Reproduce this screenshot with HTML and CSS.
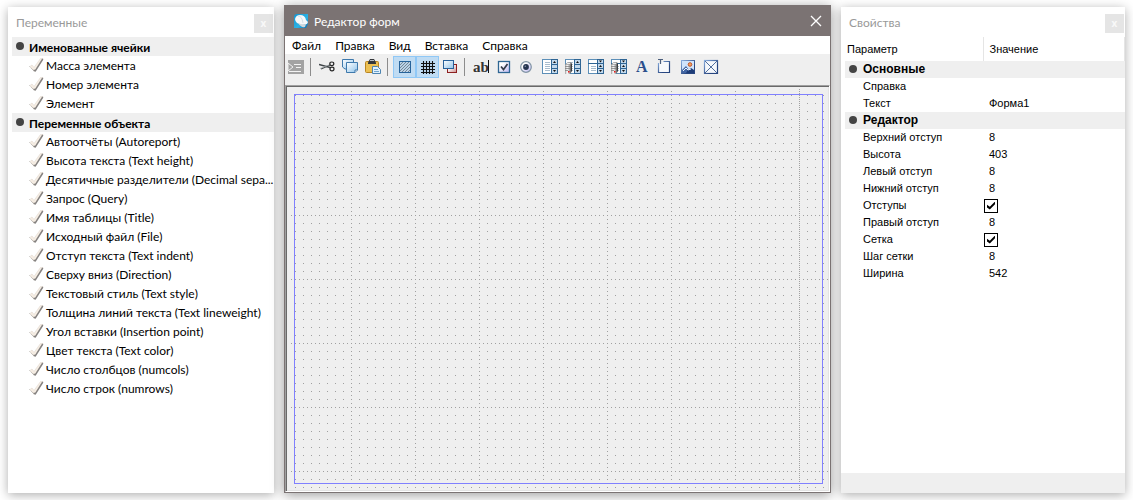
FILE: index.html
```html
<!DOCTYPE html>
<html lang="ru">
<head>
<meta charset="utf-8">
<title>Редактор форм</title>
<link rel="stylesheet" href="styles.css">
</head>
<body>
<svg class="defs" aria-hidden="true">
  <defs>
    <linearGradient id="blue" x1="0" y1="0" x2="1" y2="1"><stop offset="0" stop-color="#fff"/><stop offset="1" stop-color="#8fc3ea"/></linearGradient>
    <linearGradient id="lilac" x1="0" y1="0" x2="1" y2="1"><stop offset="0.3" stop-color="#fff"/><stop offset="1" stop-color="#b9b4f2"/></linearGradient>
    <linearGradient id="red" x1="0" y1="0" x2="1" y2="1"><stop offset="0.3" stop-color="#fff"/><stop offset="1" stop-color="#c98a8a"/></linearGradient>
    <linearGradient id="frame" x1="0" y1="0" x2="1" y2="1"><stop offset="0" stop-color="#8aaede"/><stop offset="0.7" stop-color="#27457f"/></linearGradient>
    <linearGradient id="steel"><stop offset="0" stop-color="#999"/><stop offset="0.3" stop-color="#fff"/><stop offset="0.6" stop-color="#bbb"/><stop offset="1" stop-color="#222"/></linearGradient>
    <linearGradient id="app" x1="0" y1="0" x2="1" y2="1"><stop offset="0" stop-color="#1794cf"/><stop offset="0.6" stop-color="#2bb3e6"/><stop offset="1" stop-color="#0a69ad"/></linearGradient>
    <symbol id="tick" viewBox="0 0 16 16">
      <path d="M1 9.500l2-1.500 2 2.500L11.500 1.500h2.500L6 14H5z" fill="#f6eee4" stroke="#e2d9d0" stroke-width="0.600"/>
      <path d="M13.800 2L6.300 13.800 4.500 13.200" fill="none" stroke="#858280" stroke-width="1.500"/>
      <path d="M0.500 9.500l4 4" fill="none" stroke="#aaa5a0" stroke-width="0.900" stroke-dasharray="1 1"/>
    </symbol>
    <symbol id="list" viewBox="0 0 16 16">
      <rect x="0.500" y="1.500" width="15" height="14" fill="#fff" stroke="#5c8fb8"/>
      <path d="M3 4.500h5M3 6.500h5M3 8.500h5M3 10.500h5M3 12.500h5" stroke="#a8bccd"/>
      <path d="M9 1h7v15H9z" fill="#2f6594"/>
      <path d="M10 2h5v4h-5zM10 7h5v3h-5zM10 11h5v4h-5z" fill="#c3d9ec"/>
      <path d="M11 5h3l-1.500-2zM11 12h3l-1.500 2z" fill="#111"/>
    </symbol>
    <symbol id="combo" viewBox="0 0 16 16">
      <rect x="0.500" y="1.500" width="15" height="14" fill="#fff" stroke="#5c8fb8"/>
      <path d="M0 5h16v1H0zM9 1h7v15H9z" fill="#2f6594"/>
      <path d="M3 8.500h5M3 10.500h5M3 12.500h5" stroke="#a8bccd"/>
      <path d="M10 2h5v3h-5zM10 6h5v4h-5zM10 11h5v4h-5z" fill="#c3d9ec"/>
      <path d="M11 2.500h3l-1.500 2zM11 9h3l-1.500-2zM11 12h3l-1.500 2z" fill="#111"/>
    </symbol>
    <symbol id="base" viewBox="0 0 16 16">
      <path d="M0 7l2-2.500h4L7 6v7l-2 3H0z" fill="url(#steel)"/>
      <path d="M0.500 6.500l2-2h3.500L5 6.500z" fill="#eee" stroke="#777" stroke-width="0.500"/>
      <path d="M0 8.500h5M0 10.500h5M0 12.500h3" stroke="#777" stroke-width="0.700"/>
      <path d="M3 13h1.500v1.500H3z" fill="#f01818"/>
    </symbol>
  </defs>
</svg>

<main class="desktop">
  <section class="panel variables">
    <header class="panel-head"><h2>Переменные</h2><button class="panel-close" aria-label="Закрыть">x</button></header>
    <h3 class="group">Именованные ячейки</h3>
    <ul class="items">
      <li><svg class="tick"><use href="#tick"/></svg><span>Масса элемента</span></li>
      <li><svg class="tick"><use href="#tick"/></svg><span>Номер элемента</span></li>
      <li><svg class="tick"><use href="#tick"/></svg><span>Элемент</span></li>
    </ul>
    <h3 class="group">Переменные объекта</h3>
    <ul class="items">
      <li><svg class="tick"><use href="#tick"/></svg><span>Автоотчёты (Autoreport)</span></li>
      <li><svg class="tick"><use href="#tick"/></svg><span>Высота текста (Text height)</span></li>
      <li><svg class="tick"><use href="#tick"/></svg><span>Десятичные разделители (Decimal sepa...</span></li>
      <li><svg class="tick"><use href="#tick"/></svg><span>Запрос (Query)</span></li>
      <li><svg class="tick"><use href="#tick"/></svg><span>Имя таблицы (Title)</span></li>
      <li><svg class="tick"><use href="#tick"/></svg><span>Исходный файл (File)</span></li>
      <li><svg class="tick"><use href="#tick"/></svg><span>Отступ текста (Text indent)</span></li>
      <li><svg class="tick"><use href="#tick"/></svg><span>Сверху вниз (Direction)</span></li>
      <li><svg class="tick"><use href="#tick"/></svg><span>Текстовый стиль (Text style)</span></li>
      <li><svg class="tick"><use href="#tick"/></svg><span>Толщина линий текста (Text lineweight)</span></li>
      <li><svg class="tick"><use href="#tick"/></svg><span>Угол вставки (Insertion point)</span></li>
      <li><svg class="tick"><use href="#tick"/></svg><span>Цвет текста (Text color)</span></li>
      <li><svg class="tick"><use href="#tick"/></svg><span>Число столбцов (numcols)</span></li>
      <li><svg class="tick"><use href="#tick"/></svg><span>Число строк (numrows)</span></li>
    </ul>
  </section>

  <section class="editor">
    <header class="titlebar">
      <svg class="app-icon" viewBox="0 0 16 16"><path d="M1 4q0-3 3-3h11v10l-2 4H1z" fill="url(#app)"/><path d="M2 6q1-4 5-4 5 0 6 5l2 2-1 2-5 1-5-2q-2-2-2-4z" fill="#f5f8fa"/><path d="M5 10q4 2 8 1l-1 3q-4 1-7-4z" fill="#cfd6db"/><path d="M5 3q4 0 5 7" fill="none" stroke="#c3d3dd" stroke-width="0.700"/></svg>
      <h1>Редактор форм</h1>
      <button class="close" aria-label="Закрыть окно"><svg viewBox="0 0 12 12"><path d="M1 1l10 10M11 1L1 11" stroke="#fff" stroke-width="1.300"/></svg></button>
    </header>
    <nav class="menu"><button>Файл</button><button>Правка</button><button>Вид</button><button>Вставка</button><button>Справка</button></nav>
    <div class="toolbar">
      <button disabled aria-label="Выполнить"><svg viewBox="0 0 16 16"><path d="M0 2h16v14H0z" fill="#a3a3a3"/><path d="M0 5l5 4-5 4z" fill="#a3a3a3" stroke="#efefef"/><path d="M6 6.500h7M8 9.500h5M1 13.500h12" stroke="#f3f3f3"/></svg></button>
      <span class="sep"></span>
      <button aria-label="Вырезать"><svg viewBox="0 0 16 16"><path d="M0 6.500L11 9.500M2 11L11 7" stroke="#3f4548" stroke-width="1.300"/><path d="M1 10.500l9-3.500" stroke="#a9afb2" stroke-width="0.700"/><ellipse cx="12.800" cy="5.800" rx="2" ry="1.800" fill="none" stroke="#252525" stroke-width="1.200"/><ellipse cx="13" cy="11" rx="2" ry="1.800" fill="none" stroke="#252525" stroke-width="1.200"/></svg></button>
      <button aria-label="Копировать"><svg viewBox="0 0 16 16"><path d="M0.500 1.500h11V11H3L0.500 9z" fill="url(#blue)" stroke="#3e79ac"/><path d="M4.500 4.500H15.500V12l-2.500 2.500H4.500z" fill="url(#blue)" stroke="#3e79ac"/><path d="M15.500 12H13v2.500" fill="#fff" stroke="#3e79ac"/></svg></button>
      <button aria-label="Вставить"><svg viewBox="0 0 16 16"><rect x="0.500" y="3.500" width="13" height="11" rx="1" fill="#ecc052" stroke="#b98522"/><path d="M3 4.500L5 1h4l2 3.500V6H3z" fill="#33363a"/><path d="M5 2h4v1H5z" fill="#b8bdc0"/><path d="M7.500 8.500h5l3 3v4h-8z" fill="#e1f1fc" stroke="#4d84b0"/><path d="M9 11.500h4M9 13.500h5" stroke="#6fa5d0"/></svg></button>
      <span class="sep"></span>
      <button class="on" aria-pressed="true" aria-label="Отступы"><svg viewBox="0 0 16 16"><rect x="3.500" y="3.500" width="11" height="11" fill="#b9d2e8" stroke="#27639a"/><path d="M4 7l3-3M4 10l6-6M4 13l9-9M6 14l8-8M9 14l5-5M12 14l2-2" stroke="#6f7f8c" stroke-width="0.900"/></svg></button>
      <button class="on" aria-pressed="true" aria-label="Сетка"><svg viewBox="0 0 16 16"><path d="M4.500 3v13M7.500 3v13M10.500 3v13M13.500 3v13M2 5.500h14M2 8.500h14M2 11.500h14M2 14.500h14" stroke="#111" stroke-width="1.100"/></svg></button>
      <button aria-label="Порядок"><svg viewBox="0 0 16 16"><rect x="5.500" y="6.500" width="9" height="8" fill="url(#red)" stroke="#8d2020"/><rect x="1.500" y="2.500" width="10" height="8" fill="url(#blue)" stroke="#26609a"/></svg></button>
      <span class="sep"></span>
      <button aria-label="Поле ввода"><svg viewBox="0 0 16 16"><text class="ab" x="0" y="14">ab</text><path d="M15.500 2v13" stroke="#111"/></svg></button>
      <button aria-label="Флажок"><svg viewBox="0 0 16 16"><rect x="2.500" y="3.500" width="11" height="11" fill="url(#lilac)" stroke="#2e6693" stroke-width="1.300"/><path d="M5 8.500l2.500 3L11.500 6" fill="none" stroke="#333b49" stroke-width="1.700"/></svg></button>
      <button aria-label="Переключатель"><svg viewBox="0 0 16 16"><circle cx="7" cy="9" r="5.300" fill="url(#lilac)" stroke="#8295a5" stroke-width="1.200"/><circle cx="7" cy="9" r="2.900" fill="#25344f"/><circle cx="6.300" cy="8.300" r="0.800" fill="#8795ae"/></svg></button>
      <button aria-label="Список"><svg><use href="#list"/></svg></button>
      <button aria-label="Список из базы"><svg><use href="#list"/><use href="#base"/></svg></button>
      <button aria-label="Раскрывающийся список"><svg><use href="#combo"/></svg></button>
      <button aria-label="Раскрывающийся список из базы"><svg><use href="#combo"/><use href="#base"/></svg></button>
      <button aria-label="Надпись"><svg viewBox="0 0 16 16"><text class="letter" x="2" y="14">A</text></svg></button>
      <button aria-label="Группа"><svg viewBox="0 0 16 16"><path d="M6.500 3.500h6V14.500H1.500V5" fill="#f7f9fc" stroke="url(#frame)" stroke-width="1.200"/><path d="M1 1.500h5M3.500 1v5" stroke="#4c5f7d" stroke-width="1.200"/></svg></button>
      <button aria-label="Рисунок"><svg viewBox="0 0 16 16"><rect x="1.500" y="2.500" width="13" height="13" fill="#cfe3fb" stroke="url(#frame)"/><path d="M2 12l4-4 5 7H2z" fill="#4165a3"/><path d="M8 12l3-2 3 2v3H6z" fill="#1d3c77"/><path d="M3 13l3-3 2 2 3-1" fill="none" stroke="#eef4fc"/><circle cx="10" cy="6.500" r="1.800" fill="#f3a05a" stroke="#bd532c"/></svg></button>
      <button aria-label="Изображение"><svg viewBox="0 0 16 16"><rect x="1.500" y="2.500" width="13" height="13" fill="#f5f8fc" stroke="url(#frame)" stroke-width="1.200"/><path d="M2 3l12 12M14 3L2 15" stroke="#3d5d92" stroke-width="0.900"/></svg></button>
    </div>
    <div class="canvas">
      <svg class="grid" shape-rendering="crispEdges">
        <defs>
          <pattern id="dots" width="8" height="8" patternUnits="userSpaceOnUse"><path d="M0 0h1v1H0z"/></pattern>
          <pattern id="rows" width="4" height="64" patternUnits="userSpaceOnUse"><path d="M0 0h1v1H0z"/></pattern>
          <pattern id="cols" width="64" height="4" patternUnits="userSpaceOnUse"><path d="M0 0h1v1H0z"/></pattern>
          <pattern id="edge" width="512" height="2" patternUnits="userSpaceOnUse"><path d="M0 0h1v1H0z"/></pattern>
        </defs>
        <g><rect x="1" y="1" width="100%" height="100%" fill="url(#dots)"/><rect x="1" y="1" width="100%" height="100%" fill="url(#rows)"/><rect x="1" y="1" width="100%" height="100%" fill="url(#cols)"/><rect x="1" y="1" width="100%" height="100%" fill="url(#edge)"/></g>
      </svg>
      <div class="form-bounds"></div>
    </div>
  </section>

  <section class="panel properties">
    <header class="panel-head"><h2>Свойства</h2><button class="panel-close" aria-label="Закрыть">x</button></header>
    <table>
      <thead><tr><th>Параметр</th><th>Значение</th></tr></thead>
      <tbody>
        <tr class="section"><th colspan="2">Основные</th></tr>
        <tr><td>Справка</td><td></td></tr>
        <tr><td>Текст</td><td>Форма1</td></tr>
        <tr class="section"><th colspan="2">Редактор</th></tr>
        <tr><td>Верхний отступ</td><td>8</td></tr>
        <tr><td>Высота</td><td>403</td></tr>
        <tr><td>Левый отступ</td><td>8</td></tr>
        <tr><td>Нижний отступ</td><td>8</td></tr>
        <tr><td><label for="margins">Отступы</label></td><td class="check"><input type="checkbox" id="margins" checked></td></tr>
        <tr><td>Правый отступ</td><td>8</td></tr>
        <tr><td><label for="grid">Сетка</label></td><td class="check"><input type="checkbox" id="grid" checked></td></tr>
        <tr><td>Шаг сетки</td><td>8</td></tr>
        <tr><td>Ширина</td><td>542</td></tr>
      </tbody>
    </table>
    <footer class="hint"></footer>
  </section>
</main>
</body>
</html>
```

FILE: styles.css
```css
* { box-sizing: border-box; }
body {
  margin: 0;
  background: #fff;
  color: #000;
  font-family: Lato, "Noto Sans", sans-serif;
  font-size: 12px;
}
h1, h2, h3, ul { margin: 0; padding: 0; font-size: 12px; font-weight: 400; }
button { margin: 0; padding: 0; border: 0; background: none; font: inherit; color: inherit; }
.defs { position: absolute; width: 0; height: 0; }

.desktop {
  display: grid;
  grid-template-columns: 266px 1fr 284px;
  column-gap: 10px;
  min-height: 100vh;
  padding: 5px 8px 7px;
}

.panel {
  display: flex;
  flex-direction: column;
  margin-top: 2px;
  background: #fff;
  box-shadow: 0 2px 10px rgba(0, 0, 0, 0.32);
}
.panel-head {
  display: flex;
  justify-content: space-between;
  height: 30px;
  padding: 7px 1px 4px 8px;
  color: #999;
}
.panel-head h2 { line-height: 17px; }
.panel-close {
  width: 19px;
  height: 19px;
  background: #e5e5e5;
  color: #f8f8f8;
  font: bold 10px/17px "Open Sans", sans-serif;
}

.group {
  position: relative;
  height: 19px;
  margin-left: 4px;
  padding-left: 17px;
  background: #efefef;
  font-weight: 700;
  line-height: 21px;
}
.group::before, .section th::before {
  content: "";
  position: absolute;
  top: 5px;
  left: 4px;
  width: 8px;
  height: 8px;
  border-radius: 50%;
  background: #444;
}
.items { list-style: none; }
.items li {
  display: flex;
  height: 19px;
  padding-left: 21px;
  line-height: 20px;
  white-space: nowrap;
}
.tick { flex: none; width: 16px; height: 16px; margin: 1px 1px 0 0; }

.editor {
  display: flex;
  flex-direction: column;
  border: 1px solid #7b7373;
  background: #fff;
  box-shadow: 0 2px 12px rgba(0, 0, 0, 0.4);
}
.titlebar {
  display: flex;
  align-items: center;
  height: 30px;
  padding: 0 8px;
  background: #7b7373;
  color: #fff;
}
.app-icon { width: 16px; height: 16px; margin-right: 5px; }
.close { width: 12px; height: 12px; margin-left: auto; }
.close svg { display: block; }
.menu { display: flex; gap: 14px; height: 18px; padding-left: 7px; line-height: 20px; }

.toolbar {
  display: flex;
  height: 31px;
  padding-top: 2px;
  background: #efefef;
}
.toolbar button {
  display: grid;
  place-content: start;
  width: 23px;
  height: 22px;
  padding: 1px 2px;
  border: 1px solid transparent;
}
.toolbar svg { width: 16px; height: 16px; }
.toolbar .on { border-color: #90c8f6; background: #c0dcf3; }
.sep { width: 1px; height: 18px; margin: 2px 5px 0 2px; background: #8c8c8c; }
.ab { font: bold 15px "Liberation Serif", serif; fill: #333; }
.letter { font: bold 16px "Liberation Serif", serif; fill: #2c4f8c; }

.canvas {
  position: relative;
  flex: 1;
  border: 1px solid;
  border-color: #a0a0a0 #fff #fff #a0a0a0;
  background: #efefef;
  box-shadow: inset 1px 1px #696969, inset -1px -1px #e3e3e3;
}
.grid { position: absolute; top: 1px; left: 1px; width: calc(100% - 2px); height: calc(100% - 2px); fill: #a0a0a0; }
.form-bounds { position: absolute; inset: 8px 6px 7px 8px; border: 1px solid #8080ff; }

.properties { font-family: "Liberation Sans", Arial, sans-serif; font-size: 11px; }
.properties h2 { font-family: Lato, sans-serif; }
table { width: 100%; border-collapse: collapse; table-layout: fixed; }
table th, table td { height: 17px; padding: 0; font-weight: 400; line-height: 17px; text-align: left; }
tbody td:first-child { padding-left: 22px; }
tbody td:last-child { padding-left: 6px; }
thead th { height: 24px; padding-left: 6px; border-right: 1px solid #e5e5e5; }
thead th:first-child { width: 142px; }
.section th {
  position: relative;
  padding-left: 22px;
  background: linear-gradient(#efefef, #efefef) 4px 0 no-repeat;
  font-size: 12px;
  font-weight: 700;
}
.section th::before { top: 4px; left: 8px; }
tbody td.check { padding-left: 1px; }
.check input {
  appearance: none;
  display: block;
  width: 14px;
  height: 14px;
  margin: 0;
  border: 1px solid #000;
  background: #fff;
}
.check input:checked::before {
  content: "";
  display: block;
  width: 8px;
  height: 8px;
  margin: 2px;
  background: #000;
  clip-path: polygon(0 40%, 35% 65%, 100% 0, 100% 35%, 35% 100%, 0 75%);
}
.hint { height: 20px; margin-top: auto; background: #efefef; }
```
